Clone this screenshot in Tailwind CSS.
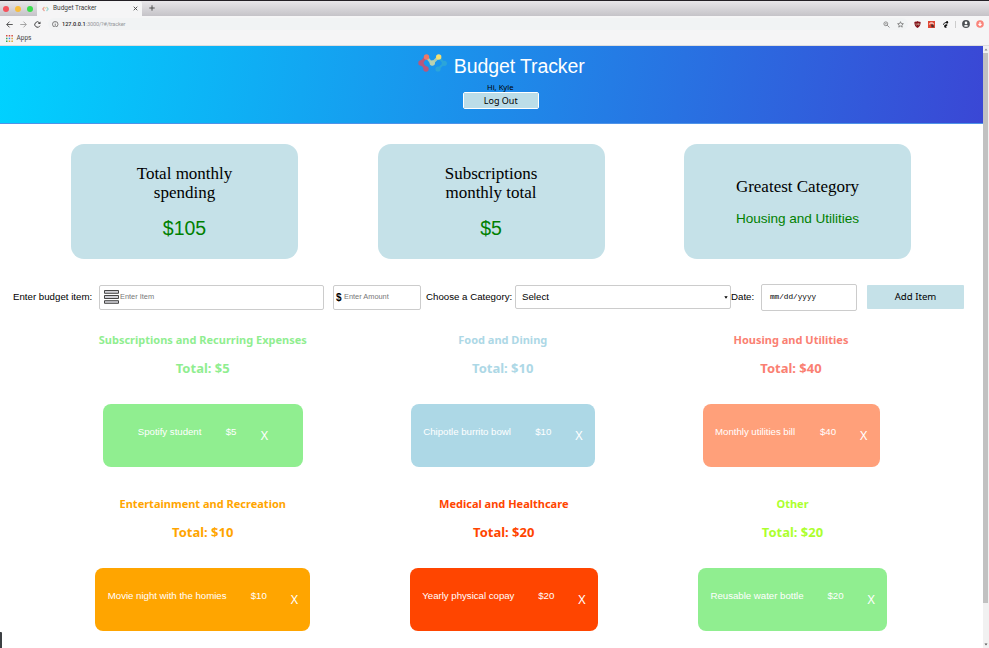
<!DOCTYPE html>
<html lang="en">
<head>
<meta charset="utf-8">
<title>Budget Tracker</title>
<script src="https://cdn.jsdelivr.net/npm/@tailwindcss/browser@4"></script>
</head>
<body class="w-[989px] h-[648px] overflow-hidden bg-white text-black font-['Liberation_Sans',sans-serif] relative">
<!-- Browser chrome -->
<div class="h-[46px] bg-[#f5f5f6] border-b border-[#dedede]">
  <div class="h-4 border-t border-[#231f25] bg-linear-to-b from-[#e8e6e9] to-[#c5c3c8] flex items-end">
    <div class="w-9 h-full flex items-center pl-[3px] gap-[6px] pt-px">
      <i class="size-[6px] rounded-full bg-[#f5515c]"></i><i class="size-[6px] rounded-full bg-[#f8bd3d]"></i><i class="size-[6px] rounded-full bg-[#38dc4d]"></i>
    </div>
    <div class="w-[105px] h-[15px] rounded-t-[3px] bg-[#f5f5f6] flex items-center pl-[5px] pr-[4px] ml-[1px]">
      <svg class="w-[7px] h-[6px] mr-[4px]" viewBox="0 0 7 6" fill="none"><path d="M2.5 1 .8 3l1.700 2" stroke="#e9a399" stroke-width="1.200"/><path d="m4.500 1 1.700 2-1.700 2" stroke="#a0d8d4" stroke-width="1.200"/><path d="m2.500 1 1 1.500L4.500 1" stroke="#efd9a0"/></svg>
      <span class="text-[6.500px] text-[#3b3d40] font-['Roboto',sans-serif] flex-1 whitespace-nowrap">Budget Tracker</span>
      <svg class="size-[5px]" viewBox="0 0 5 5" stroke="#444" stroke-width=".9"><path d="m.7.7 3.600 3.600M4.300.7.7 4.300"/></svg>
    </div>
    <svg class="size-[6px] mb-[5px] ml-[7px]" viewBox="0 0 6 6" stroke="#444" stroke-width=".9"><path d="M3 .3v5.400M.3 3h5.400"/></svg>
  </div>
  <div class="h-4 flex items-center pl-[6px] pr-[5.500px]">
    <svg class="size-[7px]" viewBox="0 0 8 8" fill="none" stroke="#444"><path d="M7.700 4H1M4 .7.8 4 4 7.300"/></svg>
    <svg class="size-[7px] ml-[7px]" viewBox="0 0 8 8" fill="none" stroke="#999"><path d="M.3 4H7M4 .7 7.200 4 4 7.300"/></svg>
    <svg class="size-[7px] ml-[7px]" viewBox="0 0 8 8" fill="none" stroke="#444" stroke-width="1.100"><path d="M6.800 5.400A3.100 3.100 0 1 1 6.300 2"/><path d="M7.400.5v3H4.400z" fill="#444" stroke="none"/></svg>
    <div class="ml-[7px] w-[860px] h-3 rounded-full bg-[#f1f3f4] flex items-center pl-[4px]">
      <svg class="size-[6.500px]" viewBox="0 0 8 8" fill="none" stroke="#555" stroke-width=".9"><circle cx="4" cy="4" r="3.400"/><path d="M4 3.500V6M4 2v.8"/></svg>
      <span class="ml-[3.500px] text-[5.600px] text-[#222] font-['Roboto',sans-serif] flex-1 font-medium">127.0.0.1<span class="text-[#96999c] font-normal tracking-[-.15px]">:3000/?#/tracker</span></span>
      <svg class="size-[7px] mr-[7px]" viewBox="0 0 8 8" fill="none" stroke="#777" stroke-width=".9"><circle cx="3.200" cy="3.200" r="2.200"/><path d="m4.800 4.800 2.600 2.600M2.200 3.200h2"/></svg>
      <svg class="size-[7px] mr-[4px]" viewBox="0 0 8 8" fill="none" stroke="#666" stroke-width=".8"><path d="m4 .8.900 2.100 2.400.200-1.800 1.600.500 2.300L4 5.800 2 7l.5-2.300L.7 3.100l2.400-.200z"/></svg>
    </div>
    <div class="flex items-center ml-auto">
      <svg class="size-[7px]" viewBox="0 0 8 8"><path d="M4 0c1 .8 2.500 1 3.600 1C7.600 4.500 6.500 6.500 4 8 1.500 6.500.4 4.500.4 1 1.500 1 3 .8 4 0z" fill="#85121c"/><path d="M2.200 2.700v1.500q.8.900 1.500 0V2.700M4.700 3h1.200v1.500H4.700z" fill="none" stroke="#ddb" stroke-width=".6"/></svg>
      <svg class="size-[7px] ml-[7px]" viewBox="0 0 8 8"><path d="M0 0h8v8H0z" fill="#df4634"/><path d="M1 3 3 1.500h2L7 3v1H5.500V3h-3v1H1z" fill="#f6cfc8"/><path d="M3.500 4H6l1 3H4z" fill="#51302d"/></svg>
      <svg class="size-[7px] ml-[7px]" viewBox="0 0 8 8" fill="#111"><ellipse cx="5.800" cy="1.500" rx="1.200" ry="1.500"/><circle cx="3.800" cy="1.800" r=".8"/><circle cx="2.500" cy="2.700" r=".7"/><circle cx="1.700" cy="3.800" r=".6"/><path d="M5.800 3.600C3.500 3.400 2 4.800 2.500 6.500 3 8.300 5.500 8.200 5.600 6.500 4.800 7 4.300 6.500 4.800 5.800 5.500 5.300 6.800 5 5.800 3.600z"/></svg>
      <i class="w-px h-[7px] bg-[#ccc] ml-[6px] mr-[6px]"></i>
      <svg class="size-[8px]" viewBox="0 0 8 8"><circle cx="4" cy="4" r="3.900" fill="#4c4f53"/><circle cx="4" cy="2.900" r="1.300" fill="#fff"/><path d="M1.500 6q2.500-2 5 0Q4 7.500 1.500 6z" fill="#fff"/></svg>
      <svg class="size-[8px] ml-[6px]" viewBox="0 0 8 8"><circle cx="4" cy="4" r="3.800" fill="#fa857c"/><path d="M4 1.900v3M2.500 4 4 5.500 5.500 4" fill="none" stroke="#fff" stroke-width="1.200"/></svg>
    </div>
  </div>
  <div class="h-[13px] flex items-center pl-[6px] text-[6.500px] text-[#444] font-['Roboto',sans-serif]">
    <svg class="size-[7px] mr-[3.500px]" viewBox="0 0 7 7"><path d="M0 0h1.500v1.500H0zM2.700 0h1.500v1.500H2.700zM5.400 0h1.500v1.500H5.400z" fill="#d44d42"/><path d="M0 2.700h1.500v1.500H0zM0 5.400h1.500v1.500H0z" fill="#3aa757"/><path d="M2.700 2.700h1.500v1.500H2.700z" fill="#4285f4"/><path d="M5.400 2.700h1.500v1.500H5.400zM2.700 5.400h1.500v1.500H2.700zM5.400 5.400h1.500v1.500H5.400z" fill="#dda836"/></svg>Apps
  </div>
</div>
<div class="flex h-[602px]">
<main class="w-[982.5px] shrink-0 flex flex-col">
  <header class="h-[78px] shrink-0 bg-linear-[98deg,#00d2ff,#3a47d5] flex flex-col items-center border-b border-[#4f93e8] pl-[19px] pt-[4px]">
    <div class="flex items-center h-[31px] whitespace-nowrap pl-px">
      <svg class="w-[29px] h-[19px] mr-[7px] mb-[4px]" viewBox="0 0 29 19" stroke-linecap="round"><path d="m3 9 5 5.500M3 9l5-6" stroke="#b9577c" stroke-width="3"/><path d="m8.500 3 5.500 6.500L20.500 3" fill="none" stroke="#a7ccb4" stroke-width="2.700"/><path d="m20 15 6-5.500M21 3l5 6.500" stroke="#2ba5da" stroke-width="2.200"/><circle cx="3" cy="9" r="2.700" fill="#b9577c"/><circle cx="8" cy="15" r="2.700" fill="#b9577c"/><circle cx="8.500" cy="3" r="2.700" fill="#ee7866"/><circle cx="14.300" cy="9" r="2.700" fill="#bad2b0"/><circle cx="20.700" cy="3" r="2.700" fill="#f4df72"/><circle cx="20" cy="15" r="2.600" fill="#2ba5da"/><circle cx="26.300" cy="9.300" r="2.600" fill="#2ba5da"/></svg>
      <h1 class="text-[19.500px] leading-[24px] text-white w-[131px] tracking-[-.1px]">Budget Tracker</h1>
    </div>
    <div class="font-['Noto_Sans',sans-serif] text-[7.600px] leading-[10px] mt-[1px] h-[10px] pr-px">Hi, Kyle</div>
    <button class="w-[76px] h-[17px] border border-white rounded-[2px] bg-[#c5e1e8]/95 bg-clip-padding font-['Noto_Sans',sans-serif] text-[9px] leading-[15px]">Log Out</button>
  </header>
  <section class="flex justify-between pl-[71px] pr-[71.500px] mt-[20px] h-[114.500px] shrink-0 text-center">
    <div class="w-[227px] rounded-[13px] bg-[#c5e1e8] flex flex-col items-center justify-center"><h2 class="font-['Liberation_Serif',serif] text-[17px] leading-[19.500px]">Total monthly<br>spending</h2><p class="text-[19.500px] leading-[22px] text-[green] mt-[14px]">$105</p></div>
    <div class="w-[227px] rounded-[13px] bg-[#c5e1e8] flex flex-col items-center justify-center"><h2 class="font-['Liberation_Serif',serif] text-[17px] leading-[19.500px]">Subscriptions<br>monthly total</h2><p class="text-[19.500px] leading-[22px] text-[green] mt-[14px]">$5</p></div>
    <div class="w-[227px] rounded-[13px] bg-[#c5e1e8] flex flex-col items-center justify-center"><h2 class="font-['Liberation_Serif',serif] text-[17px] leading-[19.500px] pt-px">Greatest Category</h2><p class="text-[13.600px] leading-[16px] text-[green] mt-[14px] tracking-[-.05px]">Housing and Utilities</p></div>
  </section>
  <form class="mt-[24.500px] h-[28px] shrink-0 flex items-center pl-[13px] text-[9.700px] whitespace-nowrap">
    <label class="w-[86px]">Enter budget item:</label>
    <div class="w-[225px] h-[25px] border border-[#ccc] rounded-[2px] flex items-center pl-[4px] text-[7.400px] text-[#777]">
      <svg class="w-[15px] h-[14px] mr-px" viewBox="0 0 15 14" fill="#d1d1d6" stroke="#333" stroke-width=".9"><path d="M.5.500h14v2.800H.5zM.5 5.500h14v3H.5zM.5 10.700h14v2.600H.5z"/></svg>Enter Item
    </div>
    <div class="w-[88px] h-[25px] border border-[#ccc] rounded-[2px] ml-[9px] flex items-center pl-[2px] text-[7.400px] text-[#777]"><b class="text-black text-[10px] w-[8px]">$</b>Enter Amount</div>
    <label class="ml-[5px] w-[89px]">Choose a Category:</label>
    <div class="w-[216px] h-[24px] border border-[#ccc] rounded-[2px] flex items-center pl-[6px] pr-[2px] justify-between">Select<svg class="w-[4px] h-[3px]" viewBox="0 0 4 3"><path d="M.3.300h3.400L2 2.800z"/></svg></div>
    <label class="w-[30px]">Date:</label>
    <div class="w-[96px] h-[27px] border border-[#ccc] rounded-[2px] flex items-center pl-[8px] font-['Liberation_Mono',monospace] text-[7.700px] mt-px">mm/dd/yyyy</div>
    <button type="button" class="w-[97px] h-[24px] ml-[10px] bg-[#c5e1e8] rounded-[1px] font-['Noto_Sans',sans-serif] text-[9.600px]">Add Item</button>
  </form>
  <section class="grid grid-cols-[405.5px_194.5px_382px] mt-[21px] text-white text-[9.700px] font-['Noto_Sans',sans-serif]">
    <article class="h-[163.500px] flex flex-col items-center text-[#90ee90] font-bold whitespace-nowrap"><h3 class="text-[11px] leading-[16px]">Subscriptions and Recurring Expenses</h3><p class="text-[13px] leading-[18px] mt-[11px]">Total: $5</p>
      <div class="mt-[26.500px] w-[200px] h-[63px] rounded-[8px] bg-[#90ee90] flex justify-center pt-[22px] text-white font-normal font-['Liberation_Sans',sans-serif] leading-[12px] tracking-[-.03px]"><span class="w-[64px]">Spotify student</span><span class="w-[11px] ml-[24px]">$5</span><b class="w-[7px] ml-[24px] mt-[4px] text-[12.500px] font-['Noto_Sans',sans-serif] font-normal">X</b></div></article>
    <article class="flex flex-col items-center text-[#add8e6] font-bold whitespace-nowrap"><h3 class="text-[11px] leading-[16px]">Food and Dining</h3><p class="text-[13px] leading-[18px] mt-[11px]">Total: $10</p>
      <div class="mt-[26.500px] w-[184px] h-[63px] rounded-[8px] bg-[#add8e6] flex justify-center pt-[22px] text-white font-normal font-['Liberation_Sans',sans-serif] leading-[12px] tracking-[-.03px]"><span class="w-[88px]">Chipotle burrito bowl</span><span class="w-[16px] ml-[24px]">$10</span><b class="w-[7px] ml-[24px] mt-[4px] text-[12.500px] font-['Noto_Sans',sans-serif] font-normal">X</b></div></article>
    <article class="flex flex-col items-center text-[#fa8072] font-bold whitespace-nowrap"><h3 class="text-[11px] leading-[16px]">Housing and Utilities</h3><p class="text-[13px] leading-[18px] mt-[11px]">Total: $40</p>
      <div class="mt-[26.500px] w-[177px] h-[63px] rounded-[8px] bg-[#ffa07a] flex justify-center pt-[22px] text-white font-normal font-['Liberation_Sans',sans-serif] leading-[12px] tracking-[-.03px]"><span class="w-[81px]">Monthly utilities bill</span><span class="w-[16px] ml-[24px]">$40</span><b class="w-[7px] ml-[24px] mt-[4px] text-[12.500px] font-['Noto_Sans',sans-serif] font-normal">X</b></div></article>
    <article class="flex flex-col items-center text-[orange] font-bold whitespace-nowrap"><h3 class="text-[11px] leading-[16px]">Entertainment and Recreation</h3><p class="text-[13px] leading-[18px] mt-[11px]">Total: $10</p>
      <div class="mt-[27px] w-[215px] h-[63px] rounded-[8px] bg-[orange] flex justify-center pt-[22px] text-white font-normal font-['Liberation_Sans',sans-serif] leading-[12px] tracking-[-.03px]"><span class="w-[119px]">Movie night with the homies</span><span class="w-[16px] ml-[24px]">$10</span><b class="w-[7px] ml-[24px] mt-[4px] text-[12.500px] font-['Noto_Sans',sans-serif] font-normal">X</b></div></article>
    <article class="flex flex-col items-center text-[orangered] font-bold whitespace-nowrap pl-[2px]"><h3 class="text-[11px] leading-[16px]">Medical and Healthcare</h3><p class="text-[13px] leading-[18px] mt-[11px]">Total: $20</p>
      <div class="mt-[27px] w-[188px] h-[63px] rounded-[8px] bg-[orangered] flex justify-center pt-[22px] text-white font-normal font-['Liberation_Sans',sans-serif] leading-[12px] tracking-[-.03px]"><span class="w-[92px]">Yearly physical copay</span><span class="w-[16px] ml-[24px]">$20</span><b class="w-[7px] ml-[24px] mt-[4px] text-[12.500px] font-['Noto_Sans',sans-serif] font-normal">X</b></div></article>
    <article class="flex flex-col items-center text-[greenyellow] font-bold whitespace-nowrap pl-[3px]"><h3 class="text-[11px] leading-[16px]">Other</h3><p class="text-[13px] leading-[18px] mt-[11px]">Total: $20</p>
      <div class="mt-[27px] w-[189px] h-[63px] rounded-[8px] bg-[#90ee90] flex justify-center pt-[22px] text-white font-normal font-['Liberation_Sans',sans-serif] leading-[12px] tracking-[-.03px]"><span class="w-[93px]">Reusable water bottle</span><span class="w-[16px] ml-[24px]">$20</span><b class="w-[7px] ml-[24px] mt-[4px] text-[12.500px] font-['Noto_Sans',sans-serif] font-normal">X</b></div></article>
  </section>
</main>
<aside class="w-[6.5px] bg-[#f1f1f1] flex flex-col items-center">
  <svg class="w-[4px] h-[7px] shrink-0" viewBox="0 0 4 7"><path d="M.5 4.500h3L2 2.500z" fill="#888"/></svg>
  <i class="w-[5px] h-[550px] bg-[#c1c1c1]"></i>
  <svg class="w-[4px] h-[7px] mt-auto" viewBox="0 0 4 7"><path d="M.5 2.500h3L2 4.500z" fill="#555"/></svg>
</aside>
</div>
<i class="absolute left-0 bottom-0 w-[2px] h-[16px] rounded-tr-[1px] bg-[#3c4043]"></i>
</body>
</html>
